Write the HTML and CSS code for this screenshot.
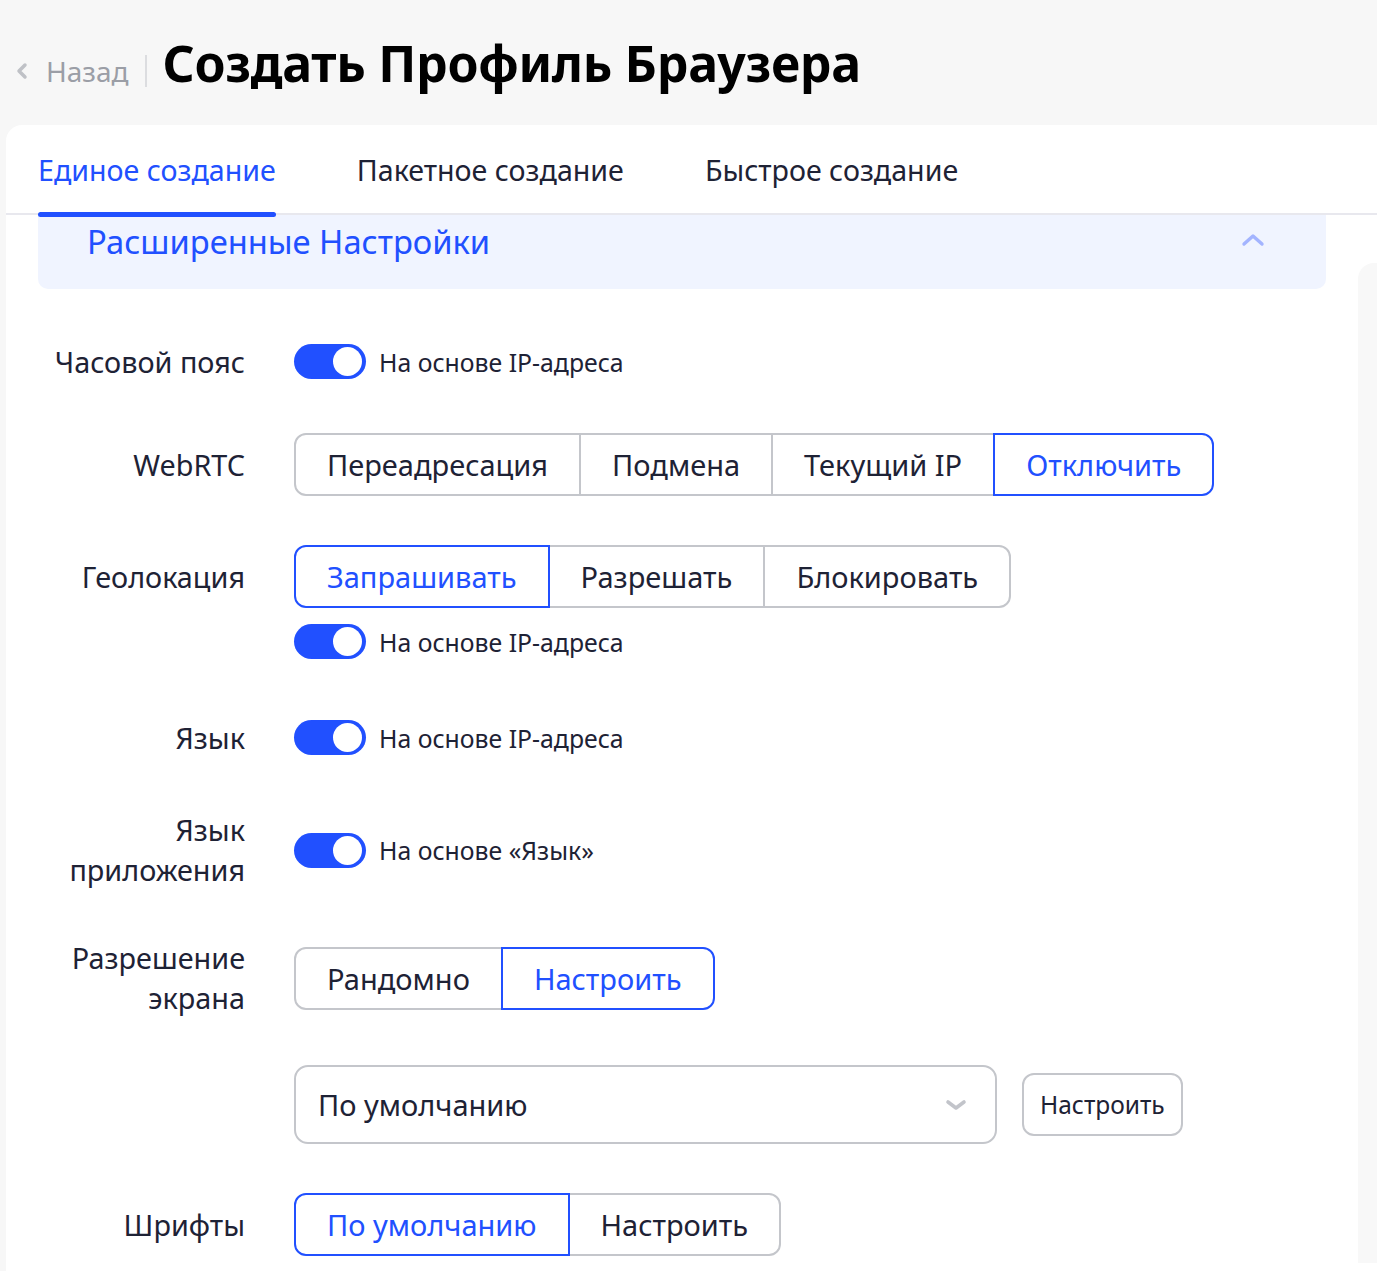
FILE: index.html
```html
<!DOCTYPE html>
<html lang="ru">
<head>
<meta charset="utf-8">
<title>Создать Профиль Браузера</title>
<link rel="stylesheet" href="styles.css">
</head>
<body>
<header class="top">
  <a class="back">
    <svg class="back-icon" width="14" height="18" viewBox="0 0 14 18"><polyline points="10,3 4,9 10,15" fill="none" stroke="#bfc1c6" stroke-width="3.5" stroke-linecap="round" stroke-linejoin="round"/></svg>
    <span>Назад</span>
  </a>
  <span class="sep"></span>
  <h1 class="title">Создать Профиль Браузера</h1>
</header>
<div class="card">
  <nav class="tabs">
    <div class="tab active">Единое создание</div>
    <div class="tab">Пакетное создание</div>
    <div class="tab">Быстрое создание</div>
  </nav>
  <div class="body">
    <div class="main">
      <div class="section-head">
        <span class="section-title">Расширенные Настройки</span>
        <svg class="section-chevron" width="24" height="14" viewBox="0 0 24 14"><polyline points="3,11 12,3 21,11" fill="none" stroke="#a3b4ff" stroke-width="3.4" stroke-linecap="round" stroke-linejoin="round"/></svg>
      </div>
      <div class="form">
        <div class="row r-tz">
          <div class="label">Часовой пояс</div>
          <div class="control"><span class="toggle"></span><span class="toggle-text">На основе IP-адреса</span></div>
        </div>
        <div class="row r-webrtc">
          <div class="label">WebRTC</div>
          <div class="control">
            <div class="seg">
              <div class="seg-item">Переадресация</div>
              <div class="seg-item">Подмена</div>
              <div class="seg-item">Текущий IP</div>
              <div class="seg-item on">Отключить</div>
            </div>
          </div>
        </div>
        <div class="row row-top r-geo">
          <div class="label label-seg">Геолокация</div>
          <div class="control control-col">
            <div class="seg">
              <div class="seg-item on">Запрашивать</div>
              <div class="seg-item">Разрешать</div>
              <div class="seg-item">Блокировать</div>
            </div>
            <div class="toggle-line"><span class="toggle"></span><span class="toggle-text">На основе IP-адреса</span></div>
          </div>
        </div>
        <div class="row r-lang">
          <div class="label">Язык</div>
          <div class="control"><span class="toggle"></span><span class="toggle-text">На основе IP-адреса</span></div>
        </div>
        <div class="row r-applang">
          <div class="label">Язык<br>приложения</div>
          <div class="control"><span class="toggle"></span><span class="toggle-text">На основе «Язык»</span></div>
        </div>
        <div class="row r-res">
          <div class="label">Разрешение<br>экрана</div>
          <div class="control">
            <div class="seg">
              <div class="seg-item">Рандомно</div>
              <div class="seg-item on">Настроить</div>
            </div>
          </div>
        </div>
        <div class="row r-select">
          <div class="label"></div>
          <div class="control">
            <div class="select">
              <span>По умолчанию</span>
              <svg class="select-chevron" width="22" height="12" viewBox="0 0 22 12"><polyline points="3,3 11,9 19,3" fill="none" stroke="#c2c4ca" stroke-width="3.6" stroke-linecap="round" stroke-linejoin="round"/></svg>
            </div>
            <button class="btn">Настроить</button>
          </div>
        </div>
        <div class="row r-fonts">
          <div class="label">Шрифты</div>
          <div class="control">
            <div class="seg">
              <div class="seg-item on">По умолчанию</div>
              <div class="seg-item">Настроить</div>
            </div>
          </div>
        </div>
      </div>
    </div>
    <div class="strip"></div>
  </div>
</div>
</body>
</html>
```

FILE: styles.css
```css
html, body {
  margin: 0;
  padding: 0;
  height: 1271px;
  overflow: hidden;
}
body {
  background: #f7f7f7;
  font-family: "Noto Sans", "Open Sans", sans-serif;
  color: #1e2235;
}

.top {
  height: 125px;
  display: flex;
  align-items: center;
  padding-left: 15px;
  box-sizing: border-box;
}
.back {
  display: flex;
  align-items: center;
  gap: 17px;
  color: #9b9ea6;
  font-size: 28px;
  line-height: 40px;
  margin-top: 16px;
}
.back-icon { display: block; }
.sep {
  width: 2px;
  height: 32px;
  background: #dcdde0;
  margin: 16px 16px 0 16px;
}
.title {
  margin: 0;
  font-size: 50px;
  font-weight: 700;
  color: #000;
  line-height: 60px;
  letter-spacing: -0.3px;
}

.card {
  margin-left: 6px;
  background: #fff;
  border-top-left-radius: 16px;
  height: 1146px;
  overflow: hidden;
}
.tabs {
  display: flex;
  gap: 81px;
  padding-left: 32px;
  height: 88px;
  border-bottom: 2px solid #e8e8ee;
}
.tab {
  position: relative;
  display: flex;
  align-items: center;
  font-size: 28.6px;
  color: #1e2235;
}
.tab.active { color: #2150ff; }
.tab.active::after {
  content: "";
  position: absolute;
  left: 0;
  right: 0;
  bottom: -4px;
  height: 5px;
  border-radius: 3px;
  background: #2150ff;
}

.body {
  display: flex;
}
.main {
  margin-left: 32px;
  width: 1288px;
  flex-shrink: 0;
}
.strip {
  flex: 1;
  margin-left: 32px;
  margin-top: 48px;
  height: 1000px;
  background: #f8f8f8;
  border-top-left-radius: 16px;
}

.section-head {
  height: 74px;
  background: #f0f4ff;
  border-radius: 0 0 10px 10px;
  display: flex;
  align-items: flex-start;
  justify-content: space-between;
  padding: 5px 61px 0 49px;
  box-sizing: border-box;
}
.section-title {
  font-size: 32.7px;
  line-height: 44px;
  color: #2150ff;
}
.section-chevron {
  margin-top: 13px;
  display: block;
}

.form {
  display: flex;
  flex-direction: column;
}
.row {
  display: flex;
  align-items: center;
  min-height: 63px;
}
.row-top { align-items: flex-start; }
.label {
  width: 207px;
  flex-shrink: 0;
  margin-right: 49px;
  text-align: right;
  font-size: 28.8px;
  line-height: 40px;
  color: #1e2235;
}
.label-seg { line-height: 63px; }
.control {
  display: flex;
  align-items: center;
}
.control-col {
  flex-direction: column;
  align-items: flex-start;
  gap: 16px;
}
.toggle-line {
  display: flex;
  align-items: center;
}

.r-tz { margin-top: 41px; }
.r-webrtc { margin-top: 40px; }
.r-geo { margin-top: 49px; }
.r-lang { margin-top: 47px; }
.r-applang { margin-top: 41px; }
.r-res { margin-top: 48px; }
.r-select { margin-top: 47px; }
.r-fonts { margin-top: 49px; }

.toggle {
  position: relative;
  width: 72px;
  height: 35px;
  border-radius: 18px;
  background: #2150ff;
  flex-shrink: 0;
}
.toggle::after {
  content: "";
  position: absolute;
  right: 4px;
  top: 3px;
  width: 29px;
  height: 29px;
  border-radius: 50%;
  background: #fff;
}
.toggle-text {
  margin-left: 13px;
  font-size: 24.8px;
  color: #1e2235;
}

.seg {
  display: flex;
  height: 63px;
}
.seg-item {
  display: flex;
  align-items: center;
  padding: 0 31px;
  border: 2px solid #c4c6cb;
  margin-left: -2px;
  font-size: 29px;
  color: #1e2235;
  background: #fff;
  box-sizing: border-box;
  position: relative;
}
.seg-item:first-child {
  margin-left: 0;
  border-radius: 12px 0 0 12px;
}
.seg-item:last-child {
  border-radius: 0 12px 12px 0;
}
.seg-item.on {
  border-color: #2150ff;
  color: #2150ff;
  z-index: 1;
}

.select {
  width: 703px;
  height: 79px;
  box-sizing: border-box;
  border: 2px solid #c4c6cb;
  border-radius: 14px;
  display: flex;
  align-items: center;
  justify-content: space-between;
  padding: 0 28px 0 22px;
  font-size: 29px;
  color: #1e2235;
}
.select-chevron { display: block; }
.btn {
  margin-left: 25px;
  height: 63px;
  padding: 0 16px;
  border: 2px solid #c4c6cb;
  border-radius: 12px;
  background: #fff;
  font-family: inherit;
  font-size: 24.5px;
  color: #1e2235;
}
```
